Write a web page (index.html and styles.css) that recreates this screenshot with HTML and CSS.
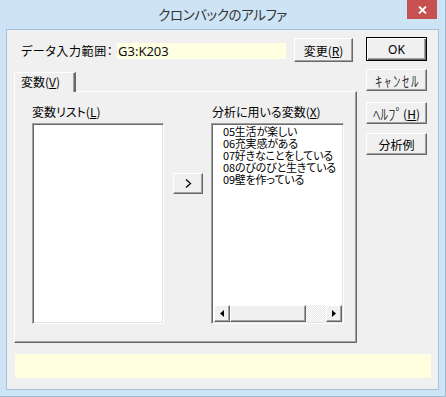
FILE: index.html
```html
<!DOCTYPE html>
<html lang="ja">
<head>
    <meta charset="UTF-8">
    <title>クロンバックのアルファ</title>
    <link rel="stylesheet" href="styles.css">
</head>
<body>
    <div class="window">
        <!-- Title bar -->
        <div class="titlebar">
            <span></span>
            <span class="title">クロンバックのアルファ</span>
            <button class="close">
                <svg width="9" height="8" viewBox="0 0 9 8">
                    <path d="M1 0.5 L8 7.5 M8 0.5 L1 7.5" stroke="#fff" stroke-width="1.8"/>
                </svg>
            </button>
        </div>

        <div class="client">
            <div class="top">
                <div class="main">
                    <div class="range-row">
                        <span class="range-label">データ入力範囲：</span>
                        <div class="range-field">G3:K203</div>
                        <button class="btn btn-change">変更(<u>R</u>)</button>
                    </div>

                    <div class="tabs">
                        <div class="tab">変数(<u>V</u>)</div>
                    </div>
                    <div class="pane">
                        <div class="lists">
                            <span class="list-label">変数リスト(<u>L</u>)</span>
                            <span></span>
                            <span class="list-label">分析に用いる変数(<u>X</u>)</span>

                            <div class="listbox"></div>
                            <button class="btn btn-move">
                                <svg width="7" height="9" viewBox="0 0 7 9">
                                    <path d="M1 0.5 L5.5 4.5 L1 8.5" fill="none" stroke="#000" stroke-width="1.3"/>
                                </svg>
                            </button>
                            <div class="listbox listbox-used">
                                <ul class="items">
                                    <li>05生活が楽しい</li>
                                    <li>06充実感がある</li>
                                    <li>07好きなことをしている</li>
                                    <li>08のびのびと生きている</li>
                                    <li>09壁を作っている</li>
                                </ul>
                                <div class="hscroll">
                                    <div class="sb-btn">
                                        <svg width="4" height="7" viewBox="0 0 4 7"><polygon points="4,0 0,3.5 4,7" fill="#000"/></svg>
                                    </div>
                                    <div class="sb-thumb"></div>
                                    <div class="sb-track"></div>
                                    <div class="sb-btn">
                                        <svg width="4" height="7" viewBox="0 0 4 7"><polygon points="0,0 4,3.5 0,7" fill="#000"/></svg>
                                    </div>
                                </div>
                            </div>
                        </div>
                    </div>
                </div>

                <div class="side">
                    <button class="btn btn-ok">OK</button>
                    <button class="btn btn-cancel">ｷｬﾝｾﾙ</button>
                    <button class="btn btn-help">ﾍﾙﾌﾟ<span class="mn">(<u>H</u>)</span></button>
                    <button class="btn btn-example">分析例</button>
                </div>
            </div>

            <div class="status"></div>
        </div>
    </div>
</body>
</html>
```

FILE: styles.css
```css
* {
    margin: 0;
    padding: 0;
    box-sizing: border-box;
}

body, html {
    width: 446px;
    height: 397px;
    overflow: hidden;
    background-color: #cde4f7;
    font-family: "Noto Sans CJK JP", sans-serif;
    font-size: 12px;
    color: #000;
}

.window {
    height: 397px;
    padding: 0 6px 7px 6px;
    border-right: 1px solid #a3bcd4;
    border-bottom: 1px solid #a3bcd4;
}

/* Title bar */
.titlebar {
    height: 29px;
    display: grid;
    grid-template-columns: 1fr auto 1fr;
    margin: 0 -6px;
}

.title {
    font-size: 13.5px;
    line-height: 29px;
    color: #333;
    font-feature-settings: "palt";
    letter-spacing: -0.4px;
}

.close {
    justify-self: end;
    width: 30px;
    height: 19px;
    margin-right: 8px;
    border: none;
    background-color: #c75050;
    display: flex;
    align-items: center;
    justify-content: center;
}

/* Client area */
.client {
    height: 361px;
    background-color: #f0f0f0;
    border: 1px solid #a9c0d6;
    padding: 7px 7px 0 7px;
}

.top {
    display: flex;
    gap: 9px;
}

.main {
    width: 343px;
}

/* Buttons */
.btn {
    font-family: "Noto Sans CJK JP", sans-serif;
    font-size: 12px;
    color: #000;
    background-color: #f0f0f0;
    border: 1px solid;
    border-color: #fff #696969 #696969 #fff;
    box-shadow: inset -1px -1px #a0a0a0;
    display: flex;
    align-items: center;
    justify-content: center;
    font-feature-settings: "palt";
}

.range-row {
    display: flex;
    align-items: flex-start;
    padding-left: 7px;
}

.range-label {
    width: 96px;
    margin-top: 6px;
    line-height: 16px;
    font-feature-settings: "palt";
    letter-spacing: 0.6px;
}

.range-field {
    width: 169px;
    height: 16px;
    margin-top: 6px;
    background-color: #ffffe1;
    font-family: "Noto Sans", "Noto Sans CJK JP", sans-serif;
    font-size: 13px;
    line-height: 16px;
    padding-left: 1px;
    color: #111;
}

.btn-change {
    width: 59px;
    height: 24px;
    margin-left: 8px;
    margin-top: 1px;
}

/* Tab */
.tabs {
    display: flex;
    margin-top: 10px;
    position: relative;
    z-index: 1;
}

.tab {
    width: 62px;
    height: 20px;
    padding-left: 6px;
    line-height: 18px;
    background-color: #f0f0f0;
    border-top: 1px solid #fff;
    border-left: 1px solid #fff;
    border-right: 2px solid #696969;
    box-shadow: inset -1px 0 #a0a0a0;
    font-feature-settings: "palt";
    margin-bottom: -1px;
}

.pane {
    height: 252px;
    border: 1px solid;
    border-color: #fff #696969 #696969 #fff;
    box-shadow: inset -1px -1px #a0a0a0;
    padding: 13px 0 0 17px;
}

.lists {
    display: grid;
    grid-template-columns: 132px 30px 132px;
    grid-template-rows: 18px 201px;
    column-gap: 9px;
}

.lists > .listbox:last-child {
    margin-left: -1px;
}

.list-label {
    line-height: 14px;
    white-space: nowrap;
    font-feature-settings: "palt";
}

.listbox {
    background-color: #fff;
    border: 1px solid;
    border-color: #a0a0a0 #fff #fff #a0a0a0;
    box-shadow: inset 1px 1px #696969, inset -1px -1px #e3e3e3;
}

.listbox-used {
    display: flex;
    flex-direction: column;
    padding: 1px 1px 1px 2px;
    overflow: hidden;
}

.items {
    list-style: none;
    flex: 1;
    padding-left: 9px;
    line-height: 12px;
    font-size: 11px;
    white-space: nowrap;
    font-feature-settings: "palt";
    letter-spacing: -0.2px;
}

.btn-move {
    align-self: start;
    height: 21px;
    margin-top: 50px;
}

/* Horizontal scrollbar */
.hscroll {
    height: 17px;
    display: flex;
}

.sb-btn {
    width: 16px;
    background-color: #f0f0f0;
    border: 1px solid;
    border-color: #fff #696969 #696969 #fff;
    box-shadow: inset -1px -1px #a0a0a0;
    display: flex;
    align-items: center;
    justify-content: center;
}

.sb-thumb {
    width: 76px;
    background-color: #f0f0f0;
    border: 1px solid;
    border-color: #fff #696969 #696969 #fff;
    box-shadow: inset -1px -1px #a0a0a0;
}

.sb-track {
    flex: 1;
    background: repeating-conic-gradient(#fff 0 25%, #e6e6e6 0 50%) 0 0 / 2px 2px;
}

/* Side buttons */
.side {
    width: 61px;
    display: flex;
    flex-direction: column;
}

.btn-ok {
    height: 24px;
    border: 1px solid #000;
    box-shadow: inset 1px 1px #fff, inset -1px -1px #696969, inset -2px -2px #a0a0a0;
    font-family: "Noto Sans", sans-serif;
}

.btn-cancel {
    height: 22px;
    margin-top: 8px;
    font-size: 15px;
    font-weight: 300;
    letter-spacing: 1.5px;
    padding-left: 2px;
}

.btn-help {
    height: 22px;
    margin-top: 11px;
    font-size: 15px;
    font-weight: 300;
}

.btn-help .mn {
    font-size: 12px;
    font-weight: 400;
}

.btn-example {
    height: 22px;
    margin-top: 9px;
}

/* Status bar */
.status {
    height: 24px;
    margin-top: 11px;
    margin-left: 1px;
    background-color: #ffffdf;
}
```
